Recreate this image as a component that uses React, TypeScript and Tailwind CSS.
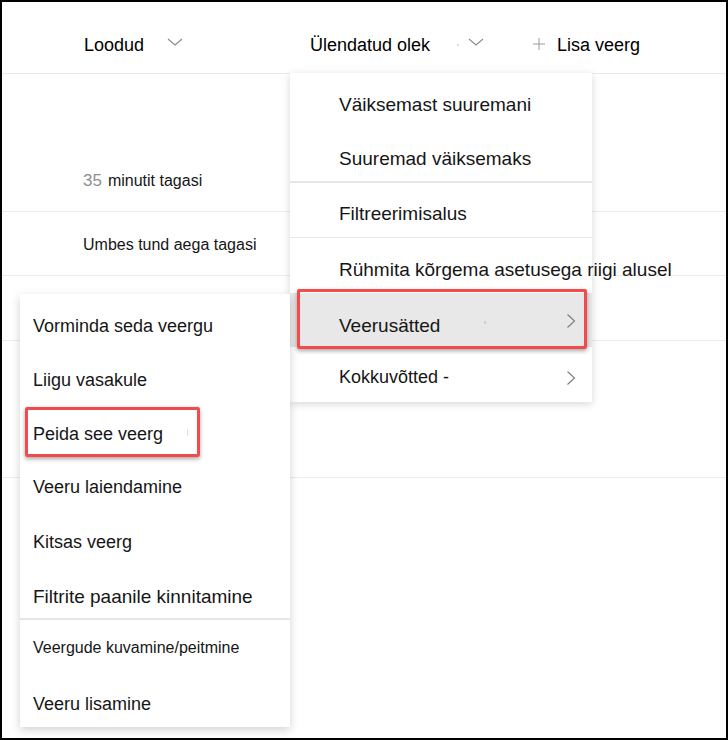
import React from "react";

type Item = {
  label: string;
  h: string;
  pt: string;
  size?: string;
  chevron?: string;
  active?: boolean;
  mark?: React.ReactNode;
  divider?: string;
};

function Chevron({ className }: { className: string }) {
  return (
    <svg className={className} width="10" height="16" viewBox="0 0 10 16" fill="none">
      <path d="M1.5 1.5 L8.5 8 L1.5 14.5" stroke="#7a7a7a" strokeWidth="1.1" />
    </svg>
  );
}

function ChevronDown({ className }: { className: string }) {
  return (
    <svg className={className} width="16" height="8" viewBox="0 0 16 8" fill="none">
      <path d="M1 1 L8 7 L15 1" stroke="#8c8c8c" strokeWidth="1.1" />
    </svg>
  );
}

const sortMenu: Item[] = [
  { label: "Väiksemast suuremani", h: "h-[54px]", pt: "pt-[22px]", size: "text-[19px]" },
  { label: "Suuremad väiksemaks", h: "h-[54px]", pt: "pt-[22px]", size: "text-[19px]", divider: "h-[2px]" },
  { label: "Filtreerimisalus", h: "h-[54px]", pt: "pt-[21px]", size: "text-[19px]", divider: "h-[1px]" },
  { label: "Rühmita kõrgema asetusega riigi alusel", h: "h-[55px]", pt: "pt-[22px]", size: "text-[19px]" },
  {
    label: "Veerusätted",
    h: "h-[54px]",
    pt: "pt-[23px]",
    size: "text-[19px]",
    chevron: "mt-[20px]",
    active: true,
    mark: <span className="ml-[44px] mt-[5px] inline-block h-[3px] w-[2px] bg-[#cfcfcf]" />,
  },
  { label: "Kokkuvõtted -", h: "h-[55px]", pt: "pt-[20px]", chevron: "mt-[23px]" },
];

const columnMenu: Item[] = [
  { label: "Vorminda seda veergu", h: "h-[54px]", pt: "pt-[22px]" },
  { label: "Liigu vasakule", h: "h-[54px]", pt: "pt-[22px]" },
  {
    label: "Peida see veerg",
    h: "h-[54px]",
    pt: "pt-[22px]",
    mark: <span className="ml-[24px] mt-[5px] inline-block h-[7px] w-[1px] bg-[#bfeff0]" />,
  },
  { label: "Veeru laiendamine", h: "h-[54px]", pt: "pt-[21px]" },
  { label: "Kitsas veerg", h: "h-[54px]", pt: "pt-[22px]" },
  {
    label: "Filtrite paanile kinnitamine",
    h: "h-[54px]",
    pt: "pt-[23px]",
    size: "text-[19px]",
    divider: "h-[2px]",
  },
  { label: "Veergude kuvamine/peitmine", h: "h-[54px]", pt: "pt-[18px]", size: "text-[16px]" },
  { label: "Veeru lisamine", h: "h-[53px]", pt: "pt-[20px]" },
];

function MenuRows({ items, pl }: { items: Item[]; pl: string }) {
  return (
    <>
      {items.map((it) => (
        <React.Fragment key={it.label}>
          <div
            className={`flex items-start justify-between ${it.h} ${pl} pr-[16px] ${
              it.active ? "bg-[#e8e8e8]" : ""
            }`}
          >
            <div className={`flex items-start whitespace-nowrap ${it.pt}`}>
              <span className={`${it.size ?? "text-[18px]"} leading-[20px] text-[#161616]`}>{it.label}</span>
              {it.mark}
            </div>
            {it.chevron && <Chevron className={`shrink-0 ${it.chevron}`} />}
          </div>
          {it.divider && <div className={`${it.divider} bg-[#e6e6e6]`} />}
        </React.Fragment>
      ))}
    </>
  );
}

export default function App() {
  return (
    <div
      className="relative h-[740px] w-[728px] overflow-hidden border-2 border-black bg-white text-[#161616]"
      style={{ fontFamily: '"Liberation Sans", Arial, sans-serif' }}
    >
      {/* column header */}
      <div className="flex h-[72px] border-b border-[#e8e8e8] pl-[82px] pt-[33px] text-[18px] leading-[20px] text-black">
        <div className="flex w-[226px] items-start">
          <span>Loodud</span>
          <ChevronDown className="ml-[23px] mt-[3px]" />
        </div>
        <div className="flex w-[223px] items-start">
          <span>Ülendatud olek</span>
          <span className="ml-[27px] mt-[9px] inline-block h-[2px] w-[2px] rounded-full bg-[#d0d0d0]" />
          <ChevronDown className="ml-[9px] mt-[3px]" />
        </div>
        <div className="flex items-start">
          <svg className="mt-[3px]" width="12" height="12" viewBox="0 0 12 12" fill="none">
            <path d="M6 0 V12 M0 6 H12" stroke="#9a9a9a" strokeWidth="1" />
          </svg>
          <span className="ml-[12px]">Lisa veerg</span>
        </div>
      </div>

      {/* rows */}
      <div className="h-[138px] border-b border-[#ececec] pl-[81px] pt-[97px] text-[16px] leading-[20px]">
        <span className="mr-[6px] text-[17px] text-[#8e8e8e]">35</span>
        <span>minutit tagasi</span>
      </div>
      <div className="h-[64px] border-b border-[#ececec] pl-[81px] pt-[23px] text-[16px] leading-[20px]">
        Umbes tund aega tagasi
      </div>
      <div className="h-[65px] border-b border-[#ececec]" />
      <div className="h-[137px] border-b border-[#ececec]" />

      {/* sort menu */}
      <div className="absolute left-[288px] top-[71px] z-10 w-[302px] bg-white shadow-[0_2px_8px_rgba(0,0,0,0.16)]">
        <MenuRows items={sortMenu} pl="pl-[49px]" />
      </div>

      {/* column settings submenu */}
      <div className="absolute left-[18px] top-[292px] z-20 w-[270px] bg-white shadow-[0_3px_9px_rgba(0,0,0,0.18)]">
        <MenuRows items={columnMenu} pl="pl-[13px]" />
      </div>

      {/* callouts */}
      <div className="absolute left-[295px] top-[287px] z-30 h-[60px] w-[290px] rounded-[2px] border-[3px] border-[#f24b4b] shadow-[0_2px_4px_rgba(0,0,0,0.35)]" />
      <div className="absolute left-[23px] top-[405px] z-30 h-[50px] w-[175px] rounded-[2px] border-[3px] border-[#f24b4b] shadow-[0_2px_4px_rgba(0,0,0,0.35)]" />
    </div>
  );
}
